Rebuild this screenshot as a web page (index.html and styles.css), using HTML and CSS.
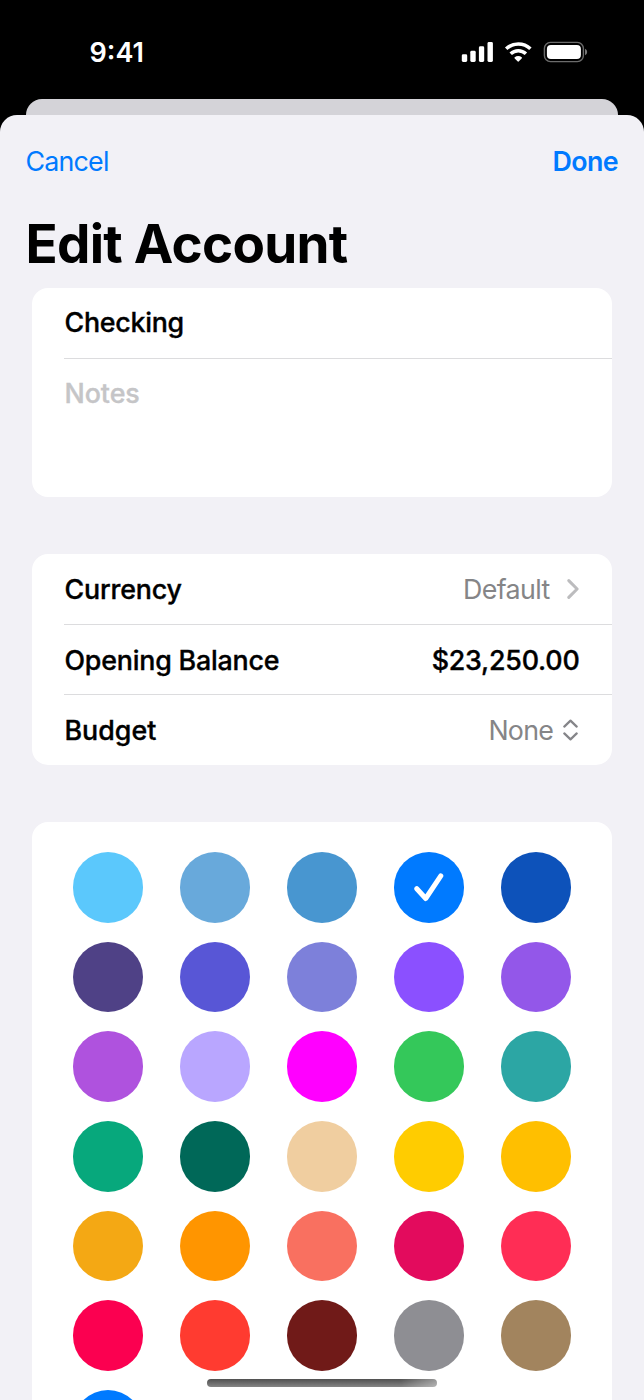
FILE: index.html
```
<!DOCTYPE html>
<html lang="en">
<head>
<meta charset="utf-8">
<title>Edit Account</title>
<link rel="stylesheet" href="styles.css">
</head>
<body>
<div class="screen">
  <header class="status">
    <span class="time">9:41</span>
    <svg class="status-icons" width="126" height="24" viewBox="0 0 126 24">
      <g fill="#fff">
        <rect x="1.8" y="14.3" width="5.4" height="7.6" rx="1.4"/>
        <rect x="10.3" y="10.8" width="5.4" height="11.1" rx="1.4"/>
        <rect x="18.9" y="6.3" width="5.3" height="15.6" rx="1.4"/>
        <rect x="27.5" y="2" width="5.4" height="19.9" rx="1.4"/>
        <path d="M57.800 21.500q.4.4.8 0l3.100-3.100q.6-.6 0-1.100c-2-1.700-5-1.700-7 0q-.6.5 0 1.100z"/>
      </g>
      <g fill="none" stroke="#fff" stroke-width="3.5">
        <path d="M46.200 8.800a17.400 17.400 0 0 1 24.200 0"/>
        <path d="M50.700 13.800a10.900 10.900 0 0 1 15.200 0"/>
      </g>
      <rect x="84.4" y="2.4" width="39" height="19.2" rx="6" fill="none" stroke="#6b6b6b" stroke-width="1.4"/>
      <rect x="86.9" y="4.9" width="34" height="14.2" rx="4" fill="#fff"/>
      <path d="M125 8.8q2.2 1 2.2 3.2t-2.2 3.2z" fill="#777"/>
    </svg>
  </header>
  <div class="back-sheet"></div>
  <main class="sheet">
    <nav class="toolbar">
      <span class="cancel">Cancel</span>
      <span class="done">Done</span>
    </nav>
    <h1 class="title">Edit Account</h1>
    <section class="card details">
      <div class="row name"><span class="t-checking">Checking</span></div>
      <div class="row notes"><span class="t-notes">Notes</span></div>
    </section>
    <section class="card settings">
      <div class="row">
        <span class="t-currency">Currency</span>
        <span class="value"><span class="t-default">Default</span>
          <svg class="chevron" width="12" height="20" viewBox="0 0 12 20"><path d="M1.800 1.600 10.100 10 1.800 18.400"/></svg>
        </span>
      </div>
      <div class="row">
        <span class="t-opening">Opening Balance</span>
        <span class="t-amount">$23,250.00</span>
      </div>
      <div class="row">
        <span class="t-budget">Budget</span>
        <span class="value"><span class="t-none">None</span>
          <svg class="updown" width="15" height="22" viewBox="0 0 15 22"><path d="M1.300 7.600 7.500 1.600 13.700 7.600M1.300 14.400 7.500 20.400 13.700 14.400"/></svg>
        </span>
      </div>
    </section>
    <section class="card palette">
      <i class="swatch sky"></i><i class="swatch cornflower"></i><i class="swatch steel"></i>
      <i class="swatch blue"><svg class="check" width="30" height="29" viewBox="0 0 30 29"><path d="M2.800 15.700 11.700 25.500 26.800 2.900"/></svg></i>
      <i class="swatch cobalt"></i>
      <i class="swatch aubergine"></i><i class="swatch indigo"></i><i class="swatch periwinkle"></i><i class="swatch violet"></i><i class="swatch amethyst"></i>
      <i class="swatch orchid"></i><i class="swatch lavender"></i><i class="swatch magenta"></i><i class="swatch green"></i><i class="swatch teal"></i>
      <i class="swatch emerald"></i><i class="swatch pine"></i><i class="swatch sand"></i><i class="swatch yellow"></i><i class="swatch amber"></i>
      <i class="swatch gold"></i><i class="swatch orange"></i><i class="swatch salmon"></i><i class="swatch raspberry"></i><i class="swatch pink"></i>
      <i class="swatch crimson"></i><i class="swatch red"></i><i class="swatch maroon"></i><i class="swatch gray"></i><i class="swatch brown"></i>
      <i class="swatch blue"></i>
    </section>
  </main>
  <div class="home-indicator"></div>
</div>
</body>
</html>
```
FILE: styles.css
```
* { box-sizing: border-box; }
body { margin: 0; background: #000; }
.screen {
  position: relative;
  display: flex;
  flex-direction: column;
  width: 644px;
  height: 1400px;
  overflow: hidden;
  background: #000;
  font-family: Inter, "Liberation Sans", sans-serif;
  font-size: 26.8px;
  line-height: 32px;
  font-weight: 500;
  color: #000;
  white-space: nowrap;
}
.status {
  display: flex;
  flex: none;
  justify-content: space-between;
  align-items: flex-start;
  height: 99px;
  padding: 36px 58px 0 89.500px;
}
.time { margin-top: 1px; color: #fff; font-weight: 600; font-size: 27px; }
.status-icons { margin: 4px 0 0; overflow: visible; }
.back-sheet {
  flex: none;
  height: 32px;
  margin: 0 26px -16px;
  border-radius: 16px 16px 0 0;
  background: #d4d3d8;
}
.sheet {
  position: relative;
  flex: none;
  height: 1285px;
  overflow: hidden;
  border-radius: 17px 17px 0 0;
  background: #f2f1f6;
}
.toolbar {
  display: flex;
  justify-content: space-between;
  padding: 30px 26px 0 25.500px;
  color: #007aff;
}
.cancel { font-weight: 400; letter-spacing: -.8px; }
.done { font-weight: 600; letter-spacing: -.6px; }
.title {
  margin: 35px 0 0 25.500px;
  font-size: 53px;
  line-height: 64px;
  font-weight: 700;
  letter-spacing: -.72px;
}
.card {
  margin: 0 32px;
  border-radius: 16px;
  background: #fff;
}
.details { height: 209px; margin-top: 12px; }
.row {
  display: flex;
  align-items: center;
  justify-content: space-between;
  height: 70.200px;
  margin-left: 32px;
  padding-right: 32.500px;
}
.row + .row { border-top: 1px solid #dcdcde; }
.name { height: 70px; padding-bottom: 2px; }
.notes { align-items: flex-start; height: 137px; padding-top: 18px; color: #c5c5c7; }
.t-checking { letter-spacing: -.25px; }
.t-notes { letter-spacing: -.05px; }
.t-currency { letter-spacing: -.15px; }
.t-opening { letter-spacing: -.2px; }
.t-budget { letter-spacing: 0; }
.t-amount { letter-spacing: -.2px; }
.t-default { letter-spacing: -.6px; }
.t-none { letter-spacing: -.8px; }
.t-checking, .t-notes, .t-currency, .t-opening, .t-budget { padding-left: .5px; }
.t-checking, .t-notes, .t-currency, .t-opening, .t-budget, .t-amount { -webkit-text-stroke: .35px currentColor; }
.settings { height: 211px; margin-top: 57px; }
.value { display: flex; align-items: center; color: #858587; font-weight: 400; }
.chevron, .updown, .check { fill: none; stroke-linecap: round; stroke-linejoin: round; }
.chevron { margin: 0 .8px 0 17px; stroke: #bcbcbe; stroke-width: 3; }
.updown { margin: 0 2px 0 9.500px; stroke: #858589; stroke-width: 2.200; }
.palette {
  display: grid;
  grid-template-columns: repeat(5, 70.700px);
  grid-auto-rows: 70.700px;
  column-gap: 36.350px;
  row-gap: 19px;
  height: 700px;
  margin-top: 57px;
  padding: 30px 0 0 40.500px;
}
.swatch { display: flex; align-items: center; justify-content: center; border-radius: 50%; }
.check { stroke: #fff; stroke-width: 5; }
.sky { background: #5bc8fc; }
.cornflower { background: #68a9db; }
.steel { background: #4896d0; }
.blue { background: #007aff; }
.cobalt { background: #0d52ba; }
.aubergine { background: #4f4186; }
.indigo { background: #5856d6; }
.periwinkle { background: #7d80da; }
.violet { background: #8b50ff; }
.amethyst { background: #9357e9; }
.orchid { background: #af52de; }
.lavender { background: #b9a6ff; }
.magenta { background: #ff00ff; }
.green { background: #34c85a; }
.teal { background: #2ca6a4; }
.emerald { background: #07a87c; }
.pine { background: #006858; }
.sand { background: #f0cea0; }
.yellow { background: #ffcc00; }
.amber { background: #ffbf00; }
.gold { background: #f4a814; }
.orange { background: #ff9500; }
.salmon { background: #f97060; }
.raspberry { background: #e30b5d; }
.pink { background: #ff2d55; }
.crimson { background: #fb0050; }
.red { background: #ff3b30; }
.maroon { background: #701a18; }
.gray { background: #8e8e93; }
.brown { background: #a2845e; }
.home-indicator {
  position: absolute;
  left: 206.500px;
  top: 1379px;
  width: 230.500px;
  height: 8px;
  border-radius: 4px;
  background: linear-gradient(90deg, transparent 84%, rgba(255, 255, 255, .4)), linear-gradient(#505050, #858585);
}
```
